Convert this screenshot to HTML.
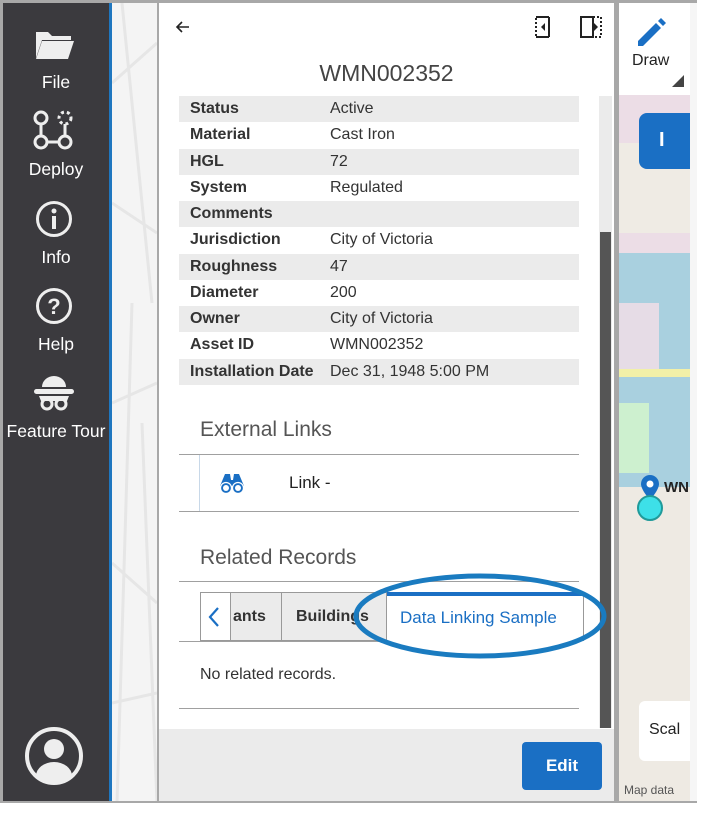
<!DOCTYPE html>
<html><head><meta charset="utf-8"><style>
*{margin:0;padding:0;box-sizing:border-box}
body{width:720px;height:828px;background:#fff;position:relative;overflow:hidden;font-family:"Liberation Sans",sans-serif;color:#222}
.abs{position:absolute}
#frame{left:0;top:0;width:697px;height:803px;background:#a8a8a8}
#side{left:3px;top:3px;width:106px;height:798px;background:#3b3a3e}
#blue{left:109px;top:3px;width:3px;height:798px;background:#1f77c0}
#mapl{left:112px;top:3px;width:45px;height:798px;background:#f4f4f4}
#panel{left:159px;top:3px;width:455px;height:798px;background:#fff}
#mapr{left:619px;top:3px;width:72px;height:798px;background:#eeeae3;overflow:hidden}
.nav{position:absolute;left:3px;width:106px;text-align:center;color:#fff;font-size:17.5px}
.row{position:absolute;left:179px;width:400px;height:26px;font-size:16px;line-height:26px}
.row.g{background:#ebebeb}
.row b{position:absolute;left:11px;font-weight:bold;color:#333}
.row span{position:absolute;left:151px;color:#333}
.hr{position:absolute;left:179px;width:400px;height:1px;background:#a0a0a0}
</style></head><body>
<div id="frame" class="abs"></div>
<div id="side" class="abs"></div>
<div id="blue" class="abs"></div>
<div id="mapl" class="abs">
<svg width="45" height="798" style="position:absolute;left:0;top:0"><g stroke="#e6e6e6" stroke-width="3" fill="none"><path d="M0 80 L45 40 M10 0 L40 300 M0 200 L45 230 M0 400 L45 380 M20 300 L5 800 M0 560 L45 600 M0 700 L45 690 M30 420 L45 800"/></g></svg>
</div>
<div id="panel" class="abs"></div>
<div id="mapr" class="abs">
<div class="abs" style="left:0;top:92px;width:72px;height:160px;background:#ecdde6"></div>
<div class="abs" style="left:0;top:140px;width:72px;height:90px;background:#efebe4"></div>
<div class="abs" style="left:0;top:250px;width:72px;height:120px;background:#a9d0df"></div>
<div class="abs" style="left:0;top:300px;width:40px;height:70px;background:#e6dce6"></div>
<div class="abs" style="left:0;top:366px;width:72px;height:8px;background:#f2f0a8"></div>
<div class="abs" style="left:0;top:374px;width:72px;height:110px;background:#a9d0df"></div>
<div class="abs" style="left:0;top:400px;width:30px;height:70px;background:#cdf0cf"></div>
<div class="abs" style="left:0;top:0;width:72px;height:92px;background:#fff"></div>
<div class="abs" style="left:20px;top:110px;width:60px;height:56px;background:#1a6fc4;border-radius:8px;color:#fff;font-weight:bold;font-size:20px;padding:16px 0 0 20px">I</div>
<div class="abs" style="left:20px;top:698px;width:60px;height:60px;background:#fff;border-radius:6px;font-size:16px;padding:20px 0 0 10px">Scal</div>
<div class="abs" style="left:5px;top:780px;font-size:12px;color:#555">Map data</div>
<svg class="abs" style="left:16px;top:470px" width="30" height="50"><path d="M15 2a9 9 0 0 1 9 9c0 6-9 16-9 16s-9-10-9-16a9 9 0 0 1 9-9z" fill="#1a6fc4"/><circle cx="15" cy="11" r="3.5" fill="#fff"/><circle cx="15" cy="35" r="12" fill="#3de0e8" stroke="#209a9a" stroke-width="2"/></svg>
<div class="abs" style="left:45px;top:476px;font-weight:bold;font-size:15px">WN</div>
</div>
<div class="abs" style="left:690px;top:3px;width:7px;height:798px;background:#f6f6f6"></div>
<div class="abs" style="left:614px;top:3px;width:5px;height:798px;background:#a8a8a8"></div>

<svg class="abs" style="left:35px;top:28px" width="40" height="32"><path d="M1 4h12l4 4h19v4H7l-6 18z" fill="#eee"/><path d="M7 13h32l-6 18H1z" fill="#eee"/></svg>
<div class="nav" style="top:72px">File</div>
<svg class="abs" style="left:33px;top:110px" width="42" height="42"><g fill="none" stroke="#eee" stroke-width="3"><circle cx="8" cy="8" r="6"/><circle cx="8" cy="32" r="6"/><circle cx="32" cy="32" r="6"/><line x1="8" y1="14" x2="8" y2="26"/><line x1="14" y1="32" x2="26" y2="32"/><line x1="32" y1="14" x2="32" y2="26"/><circle cx="32" cy="8" r="6" stroke-dasharray="3 3"/></g></svg>
<div class="nav" style="top:159px">Deploy</div>
<svg class="abs" style="left:35px;top:200px" width="38" height="38"><circle cx="19" cy="19" r="16.5" fill="none" stroke="#eee" stroke-width="3"/><circle cx="19" cy="11" r="2.5" fill="#eee"/><rect x="17" y="16" width="4" height="13" fill="#eee"/></svg>
<div class="nav" style="top:247px">Info</div>
<svg class="abs" style="left:35px;top:287px" width="38" height="38"><circle cx="19" cy="19" r="16.5" fill="none" stroke="#eee" stroke-width="3"/><text x="19" y="27" text-anchor="middle" font-size="22" font-weight="bold" fill="#eee" font-family="Liberation Sans">?</text></svg>
<div class="nav" style="top:334px">Help</div>
<svg class="abs" style="left:33px;top:373px" width="42" height="40"><path d="M9 14a12 11 0 0 1 24 0z" fill="#eee"/><rect x="1" y="16" width="40" height="5" rx="2.5" fill="#eee"/><circle cx="14" cy="31" r="5" fill="none" stroke="#eee" stroke-width="3"/><circle cx="28" cy="31" r="5" fill="none" stroke="#eee" stroke-width="3"/><path d="M6 23h30l-2 5H8z" fill="#eee"/></svg>
<div class="nav" style="top:421px">Feature Tour</div>
<svg class="abs" style="left:24px;top:726px" width="60" height="60"><circle cx="30" cy="30" r="27" fill="none" stroke="#eee" stroke-width="4"/><circle cx="30" cy="23" r="10" fill="#eee"/><path d="M12 50a18 14 0 0 1 36 0a27 27 0 0 1-36 0z" fill="#eee"/></svg>

<svg class="abs" style="left:175px;top:19px" width="16" height="16"><path d="M14 8H2M7 3L2 8l5 5" fill="none" stroke="#222" stroke-width="1.6"/></svg>
<svg class="abs" style="left:535px;top:16px" width="18" height="22"><path d="M14 1v20M1 1h13M1 21h13" fill="none" stroke="#222" stroke-width="2"/><path d="M1 2v18" stroke="#222" stroke-width="2" stroke-dasharray="2 2"/><path d="M10 7l-4 4 4 4z" fill="#222"/></svg>
<svg class="abs" style="left:580px;top:16px" width="22" height="22"><path d="M1 1h12v20H1z" fill="none" stroke="#222" stroke-width="2"/><path d="M13 1h8v20h-8" fill="none" stroke="#222" stroke-width="2" stroke-dasharray="2 2"/><path d="M14 7l4 4-4 4z" fill="#222"/></svg>
<div class="abs" style="left:159px;top:60px;width:455px;text-align:center;font-size:23px;color:#444">WMN002352</div>

<div class="row g" style="top:96px"><b>Status</b><span>Active</span></div>
<div class="row" style="top:122px"><b>Material</b><span>Cast Iron</span></div>
<div class="row g" style="top:149px"><b>HGL</b><span>72</span></div>
<div class="row" style="top:175px"><b>System</b><span>Regulated</span></div>
<div class="row g" style="top:201px"><b>Comments</b><span></span></div>
<div class="row" style="top:227px"><b>Jurisdiction</b><span>City of Victoria</span></div>
<div class="row g" style="top:254px"><b>Roughness</b><span>47</span></div>
<div class="row" style="top:280px"><b>Diameter</b><span>200</span></div>
<div class="row g" style="top:306px"><b>Owner</b><span>City of Victoria</span></div>
<div class="row" style="top:332px"><b>Asset ID</b><span>WMN002352</span></div>
<div class="row g" style="top:359px"><b>Installation Date</b><span>Dec 31, 1948 5:00 PM</span></div>

<div class="abs" style="left:599px;top:96px;width:13px;height:632px;background:#ebebeb"></div>
<div class="abs" style="left:600px;top:232px;width:11px;height:496px;background:#555"></div>

<div class="abs" style="left:200px;top:418px;font-size:21px;color:#555">External Links</div>
<div class="hr" style="top:454px"></div>
<div class="abs" style="left:199px;top:455px;width:1px;height:56px;background:#c8d8e8"></div>
<svg class="abs" style="left:219px;top:473px" width="26" height="22"><path d="M6 1h5l1 6h2l1-6h5l5 12H1z" fill="#1a6fc4"/><circle cx="7" cy="15" r="5.5" fill="#1a6fc4" stroke="#fff" stroke-width="1.2"/><circle cx="19" cy="15" r="5.5" fill="#1a6fc4" stroke="#fff" stroke-width="1.2"/><circle cx="7" cy="15" r="3" fill="#fff"/><circle cx="19" cy="15" r="3" fill="#fff"/></svg>
<div class="abs" style="left:289px;top:473px;font-size:17px;color:#222">Link -</div>
<div class="hr" style="top:511px"></div>

<div class="abs" style="left:200px;top:546px;font-size:21px;color:#555">Related Records</div>
<div class="hr" style="top:581px"></div>
<div class="abs" style="left:200px;top:592px;width:31px;height:49px;border:1px solid #999;background:#fff"></div>
<svg class="abs" style="left:207px;top:606px" width="14" height="22"><path d="M11 2L3 11l8 9" fill="none" stroke="#1a6fc4" stroke-width="2.2"/></svg>
<div class="abs" style="left:231px;top:592px;width:51px;height:49px;background:#ebebeb;border:1px solid #999;border-left:none;font-size:16px;line-height:48px;color:#333;overflow:hidden;text-indent:2px;font-weight:bold">ants</div>
<div class="abs" style="left:282px;top:592px;width:105px;height:49px;background:#ebebeb;border:1px solid #999;border-left:none;font-size:16px;line-height:48px;color:#333;font-weight:bold;padding-left:14px">Buildings</div>
<div class="abs" style="left:387px;top:592px;width:197px;height:49px;background:#fff;border-top:4px solid #1a6fc4;border-right:1px solid #999;font-size:17px;line-height:44px;color:#1a6fc4;padding-left:13px">Data Linking Sample</div>
<div class="hr" style="top:641px;width:208px"></div>
<svg class="abs" style="left:350px;top:570px" width="260" height="92"><ellipse cx="130" cy="46" rx="124" ry="40" fill="none" stroke="#1a7bc0" stroke-width="5"/></svg>
<div class="abs" style="left:200px;top:666px;font-size:16px;color:#333">No related records.</div>
<div class="hr" style="top:708px"></div>

<div class="abs" style="left:159px;top:729px;width:455px;height:72px;background:#ebebeb"></div>
<div class="abs" style="left:522px;top:742px;width:80px;height:48px;background:#1a6fc4;border-radius:4px;color:#fff;font-weight:bold;font-size:17px;text-align:center;line-height:48px">Edit</div>

<svg class="abs" style="left:632px;top:15px" width="36" height="36"><path d="M6 26L24 8l5 5-18 18H6z" fill="#1a6fc4"/><path d="M26 6l3-3 5 5-3 3z" fill="#1a6fc4"/></svg>
<div class="abs" style="left:632px;top:52px;font-size:16px;color:#222">Draw</div>
<svg class="abs" style="left:672px;top:75px" width="12" height="12"><path d="M12 0v12H0z" fill="#444"/></svg>
</body></html>
